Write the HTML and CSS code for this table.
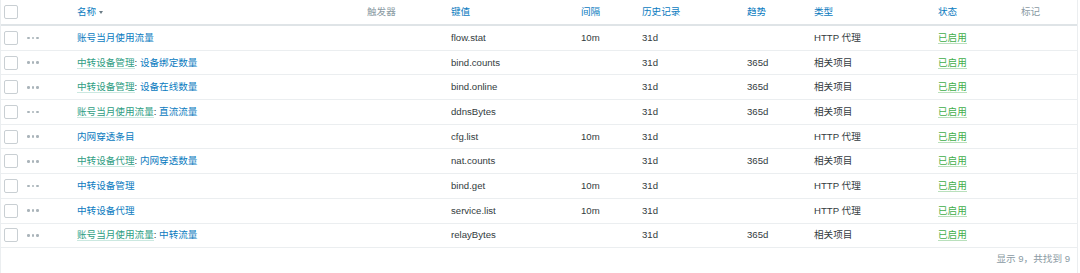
FILE: index.html
```html
<!DOCTYPE html>
<html lang="zh">
<head>
<meta charset="utf-8">
<title>Items</title>
<link rel="stylesheet" href="styles.css">
</head>
<body>
<div class="wrap">
  <table class="list">
    <colgroup>
      <col class="c-chk"><col class="c-dots"><col class="c-name"><col class="c-trig"><col class="c-key"><col class="c-int"><col class="c-hist"><col class="c-trend"><col class="c-type"><col class="c-status"><col class="c-tags">
    </colgroup>
    <thead>
      <tr>
        <th><span class="chk"></span></th>
        <th></th>
        <th class="sort">名称<span class="arrow"></span></th>
        <th class="plain">触发器</th>
        <th class="sort">键值</th>
        <th class="sort">间隔</th>
        <th class="sort">历史记录</th>
        <th class="sort">趋势</th>
        <th class="sort">类型</th>
        <th class="sort">状态</th>
        <th class="plain">标记</th>
      </tr>
    </thead>
    <tbody>
      <tr>
        <td><span class="chk"></span></td><td><span class="dots"><i></i><i></i><i></i></span></td>
        <td><a class="name">账号当月使用流量</a></td><td></td>
        <td>flow.stat</td><td>10m</td><td>31d</td><td></td><td>HTTP 代理</td>
        <td><a class="on">已启用</a></td><td></td>
      </tr>
      <tr>
        <td><span class="chk"></span></td><td><span class="dots"><i></i><i></i><i></i></span></td>
        <td><a class="tpl">中转设备管理</a>: <a class="name">设备绑定数量</a></td><td></td>
        <td>bind.counts</td><td></td><td>31d</td><td>365d</td><td>相关项目</td>
        <td><a class="on">已启用</a></td><td></td>
      </tr>
      <tr>
        <td><span class="chk"></span></td><td><span class="dots"><i></i><i></i><i></i></span></td>
        <td><a class="tpl">中转设备管理</a>: <a class="name">设备在线数量</a></td><td></td>
        <td>bind.online</td><td></td><td>31d</td><td>365d</td><td>相关项目</td>
        <td><a class="on">已启用</a></td><td></td>
      </tr>
      <tr>
        <td><span class="chk"></span></td><td><span class="dots"><i></i><i></i><i></i></span></td>
        <td><a class="tpl">账号当月使用流量</a>: <a class="name">直流流量</a></td><td></td>
        <td>ddnsBytes</td><td></td><td>31d</td><td>365d</td><td>相关项目</td>
        <td><a class="on">已启用</a></td><td></td>
      </tr>
      <tr>
        <td><span class="chk"></span></td><td><span class="dots"><i></i><i></i><i></i></span></td>
        <td><a class="name">内网穿透条目</a></td><td></td>
        <td>cfg.list</td><td>10m</td><td>31d</td><td></td><td>HTTP 代理</td>
        <td><a class="on">已启用</a></td><td></td>
      </tr>
      <tr>
        <td><span class="chk"></span></td><td><span class="dots"><i></i><i></i><i></i></span></td>
        <td><a class="tpl">中转设备代理</a>: <a class="name">内网穿透数量</a></td><td></td>
        <td>nat.counts</td><td></td><td>31d</td><td>365d</td><td>相关项目</td>
        <td><a class="on">已启用</a></td><td></td>
      </tr>
      <tr>
        <td><span class="chk"></span></td><td><span class="dots"><i></i><i></i><i></i></span></td>
        <td><a class="name">中转设备管理</a></td><td></td>
        <td>bind.get</td><td>10m</td><td>31d</td><td></td><td>HTTP 代理</td>
        <td><a class="on">已启用</a></td><td></td>
      </tr>
      <tr>
        <td><span class="chk"></span></td><td><span class="dots"><i></i><i></i><i></i></span></td>
        <td><a class="name">中转设备代理</a></td><td></td>
        <td>service.list</td><td>10m</td><td>31d</td><td></td><td>HTTP 代理</td>
        <td><a class="on">已启用</a></td><td></td>
      </tr>
      <tr>
        <td><span class="chk"></span></td><td><span class="dots"><i></i><i></i><i></i></span></td>
        <td><a class="tpl">账号当月使用流量</a>: <a class="name">中转流量</a></td><td></td>
        <td>relayBytes</td><td></td><td>31d</td><td>365d</td><td>相关项目</td>
        <td><a class="on">已启用</a></td><td></td>
      </tr>
    </tbody>
  </table>
  <div class="footer">显示 9，共找到 9</div>
</div>
</body>
</html>
```
FILE: styles.css
```css
html, body {
  margin: 0;
  padding: 0;
  background: #ffffff;
}
body {
  font-family: "Liberation Sans", Arial, "Noto Sans CJK SC", sans-serif;
  font-size: 9.6px;
  color: #333b40;
}
.wrap {
  width: 1076px;
  border-left: 1px solid #ebeef0;
  border-right: 1px solid #ebeef0;
  height: 273px;
}
.list {
  width: 100%;
  border-collapse: collapse;
  table-layout: fixed;
}
.c-chk { width: 26px; }
.c-dots { width: 50px; }
.c-name { width: 290px; }
.c-trig { width: 84px; }
.c-key { width: 130px; }
.c-int { width: 61px; }
.c-hist { width: 105px; }
.c-trend { width: 67px; }
.c-type { width: 124px; }
.c-status { width: 83px; }
.c-tags { width: 56px; }

th, td {
  padding: 0;
  text-align: left;
  white-space: nowrap;
  vertical-align: middle;
  line-height: 12px;
}
th {
  height: 24px;
  font-weight: normal;
  border-bottom: 2px solid #dfe4e7;
}
th.sort { color: #0a7bc0; }
th.plain { color: #8a9aa3; }
td {
  height: 23.7px;
  border-bottom: 1px solid #ebeef0;
}
th:first-child, td:first-child { padding-left: 3px; }
.chk {
  display: block;
  width: 12px;
  height: 12px;
  border: 1px solid #c9cfd3;
  border-radius: 2px;
  background: #fff;
}
.arrow {
  display: inline-block;
  width: 0;
  height: 0;
  margin-left: 3px;
  vertical-align: 1px;
  border-left: 2.5px solid transparent;
  border-right: 2.5px solid transparent;
  border-top: 3px solid #6b7c86;
}
.dots {
  display: flex;
  gap: 2px;
  align-items: center;
}
.dots i {
  display: block;
  width: 2.7px;
  height: 2.7px;
  border-radius: 50%;
  background: #aab4ba;
}
.name { color: #0a7bc0; }
.tpl {
  color: #2e9d82;
  border-bottom: 1px solid #cbe8e0;
}
.on {
  color: #3fae49;
  border-bottom: 1px solid #b9e0bc;
}
.footer {
  text-align: right;
  color: #8a9aa3;
  line-height: 12px;
  padding: 5px 7px 0 0;
}
```
